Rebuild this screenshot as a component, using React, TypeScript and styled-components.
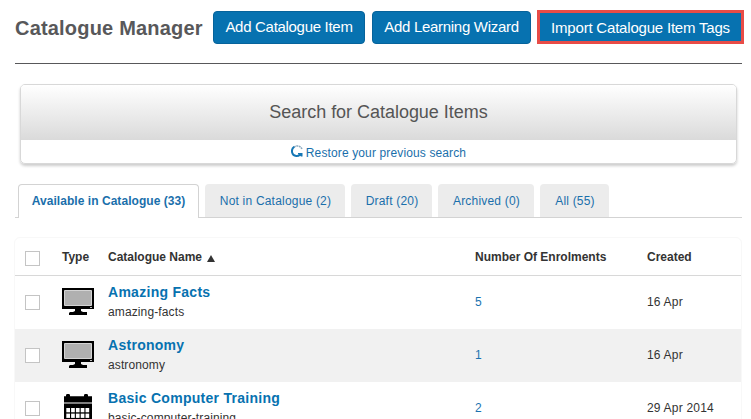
import React from "react";
import styled, { createGlobalStyle, css } from "styled-components";

const GlobalStyle = createGlobalStyle`
  * { box-sizing: border-box; }
  html, body { margin: 0; padding: 0; background: #fff; overflow: hidden; }
  body { font-family: "Liberation Sans", Arial, sans-serif; font-size: 12px; color: #333; letter-spacing: 0.2px; }
`;

const Page = styled.main`
  width: 751px;
  height: 419px;
  overflow: hidden;
  padding: 10px 7px 0 15px;
`;

const Header = styled.header`
  display: flex;
  align-items: flex-start;
  width: 727px;
  height: 54px;
  border-bottom: 1px solid #58585a;
`;

const Title = styled.h1`
  margin: 6px 0 0;
  width: 198px;
  flex: none;
  font-size: 20px;
  line-height: 24px;
  font-weight: bold;
  letter-spacing: 0.19px;
  color: #58585a;
  white-space: nowrap;
`;

const Button = styled.button<{ $width: number; $marked?: boolean }>`
  flex: none;
  width: ${(p) => p.$width}px;
  height: 33px;
  margin: 1px 7px 0 0;
  padding: 0 0 1px;
  border: 1px solid #06639b;
  border-radius: 4px;
  background: #0772b0;
  color: #fff;
  font-family: inherit;
  font-size: 15px;
  line-height: 30px;
  letter-spacing: -0.3px;
  white-space: nowrap;
  ${(p) =>
    p.$marked &&
    css`
      height: 34px;
      margin: 0 0 0 -1px;
      border: 3px solid #e84c47;
      border-radius: 0;
      padding: 1px 0 0;
      line-height: 27px;
      letter-spacing: -0.2px;
    `}
`;

const SearchPanel = styled.section`
  width: 717px;
  height: 80px;
  margin: 20px 0 0 5px;
  border: 1px solid #d8d8d8;
  border-radius: 5px;
  overflow: hidden;
  box-shadow: 0 2px 3px rgba(0, 0, 0, 0.2);
`;

const SearchTitle = styled.h2`
  margin: 0;
  height: 55px;
  background: linear-gradient(#fff, #dadada);
  color: #555;
  font-size: 18px;
  font-weight: normal;
  line-height: 54px;
  letter-spacing: -0.03px;
  text-align: center;
`;

const Restore = styled.a`
  display: flex;
  justify-content: center;
  height: 23px;
  color: #1a6fab;
  line-height: 27px;
  letter-spacing: 0.13px;
  svg { margin: 5px 3px 0 0; }
`;

const Tabs = styled.nav`
  display: flex;
  gap: 6px;
  width: 727px;
  height: 34px;
  margin-top: 20px;
  padding-left: 3px;
  border-bottom: 1px solid #d3d3d3;
`;

const Tab = styled.a<{ $width: number; $active?: boolean }>`
  width: ${(p) => p.$width}px;
  height: 33px;
  padding-left: 1px;
  border-radius: 4px 4px 0 0;
  background: #ececec;
  color: #1a6fab;
  line-height: 34px;
  text-align: center;
  white-space: nowrap;
  ${(p) =>
    p.$active &&
    css`
      height: 34px;
      padding-left: 0;
      border: 1px solid #d3d3d3;
      border-bottom: 0;
      background: #fff;
      font-weight: bold;
      line-height: 32px;
      letter-spacing: 0.05px;
    `}
`;

const Table = styled.section`
  width: 728px;
  margin: 19px 0 0 -1px;
  border: 1px solid #f8f8f8;
  border-radius: 6px 6px 0 0;
`;

const grid = css`
  display: grid;
  grid-template-columns: 47px 46px 367px 172px 1fr;
`;

const HeadRow = styled.div`
  ${grid}
  height: 38px;
  border-bottom: 1px solid #d8d8d8;
  font-weight: bold;
  line-height: 38px;
  letter-spacing: 0;
`;

const Row = styled.div<{ $shaded?: boolean }>`
  ${grid}
  height: 53px;
  background: ${(p) => (p.$shaded ? "#f1f1f1" : "#fff")};
  line-height: 53px;
`;

const Checkbox = styled.span<{ $head?: boolean }>`
  width: 15px;
  height: 15px;
  margin: ${(p) => (p.$head ? 13 : 19)}px 0 0 10px;
  border: 1px solid #c4c4c4;
  background: #fff;
`;

const IconCell = styled.div`
  padding-top: 12px;
  line-height: 0;
`;

const SortLabel = styled.span`
  display: flex;
  align-items: center;
  gap: 5px;
  svg { margin-top: 2px; }
`;

const NameCell = styled.div`
  display: flex;
  flex-direction: column;
`;

const ItemLink = styled.a`
  margin-top: 7px;
  color: #0772b0;
  font-size: 14px;
  font-weight: bold;
  line-height: 18px;
  letter-spacing: 0.28px;
`;

const Slug = styled.span`
  margin-top: 4px;
  line-height: 15px;
  letter-spacing: 0.12px;
`;

const Count = styled.a`
  color: #1a73b0;
`;

function MonitorIcon() {
  return (
    <svg width="32" height="27" viewBox="0 0 32 27">
      <path d="M0 0h32v21H19v2l2 1h4v3H7v-2l1-1h3l2-1v-2H0z" fill="#000" />
      <path d="M2.5 2.5h27v15h-27z" fill="#b0b0b0" stroke="#d4d4d4" />
      <path d="M28 19h2v1h-2z" fill="#bbb" />
    </svg>
  );
}

function CalendarIcon() {
  return (
    <svg width="32" height="31" viewBox="0 0 32 31">
      <path d="M2 2.3h2V.8L5 0h2l1 .8v1.5h14V.8l1-.8h2l1 .8v1.5h4V8.6H2zM2 9.6h28V31H2z" fill="#000" />
      {[0, 1, 2].map((row) =>
        [0, 1, 2, 3, 4].map((col) => (
          <path
            key={`${row}-${col}`}
            d={`M${4.3 + col * 4.8} ${14 + row * 5.6}h3.7v4.3h-3.7z`}
            fill="#fff"
          />
        ))
      )}
    </svg>
  );
}

function RestoreIcon() {
  return (
    <svg width="12" height="13" viewBox="0 0 12 13" fill="none">
      <path d="M3 2.2C5 .2 9 .4 11 4" stroke="#8ba9bf" strokeWidth="1.5" strokeDasharray="2 .6" />
      <path d="M3.2 1.8C-.6 4.6.7 10.7 5.2 11.1c1.5.1 2.8-.4 3.8-1.4" stroke="#1677b5" strokeWidth="2" />
      <path d="M7 8h4.5v3.5h-1.5L7 9z" fill="#1677b5" />
    </svg>
  );
}

const tabs = [
  { label: "Available in Catalogue (33)", width: 181, active: true },
  { label: "Not in Catalogue (2)", width: 140 },
  { label: "Draft (20)", width: 81 },
  { label: "Archived (0)", width: 96 },
  { label: "All (55)", width: 69 },
];

const items = [
  { name: "Amazing Facts", slug: "amazing-facts", count: 5, created: "16 Apr", Icon: MonitorIcon },
  { name: "Astronomy", slug: "astronomy", count: 1, created: "16 Apr", Icon: MonitorIcon },
  { name: "Basic Computer Training", slug: "basic-computer-training", count: 2, created: "29 Apr 2014", Icon: CalendarIcon },
];

export default function App() {
  return (
    <>
      <GlobalStyle />
      <Page>
        <Header>
          <Title>Catalogue Manager</Title>
          <Button $width={152}>Add Catalogue Item</Button>
          <Button $width={159}>Add Learning Wizard</Button>
          <Button $width={207} $marked>Import Catalogue Item Tags</Button>
        </Header>
        <SearchPanel>
          <SearchTitle>Search for Catalogue Items</SearchTitle>
          <Restore>
            <RestoreIcon />
            <span>Restore your previous search</span>
          </Restore>
        </SearchPanel>
        <Tabs>
          {tabs.map((t) => (
            <Tab key={t.label} $width={t.width} $active={t.active}>{t.label}</Tab>
          ))}
        </Tabs>
        <Table>
          <HeadRow>
            <Checkbox $head />
            <span>Type</span>
            <SortLabel>
              Catalogue Name
              <svg width="8" height="7" viewBox="0 0 8 7"><path d="M4 0l4 7H0z" fill="#333" /></svg>
            </SortLabel>
            <span>Number Of Enrolments</span>
            <span>Created</span>
          </HeadRow>
          {items.map(({ Icon, ...item }, i) => (
            <Row key={item.name} $shaded={i % 2 === 1}>
              <Checkbox />
              <IconCell><Icon /></IconCell>
              <NameCell>
                <ItemLink>{item.name}</ItemLink>
                <Slug>{item.slug}</Slug>
              </NameCell>
              <Count>{item.count}</Count>
              <span>{item.created}</span>
            </Row>
          ))}
        </Table>
      </Page>
    </>
  );
}
